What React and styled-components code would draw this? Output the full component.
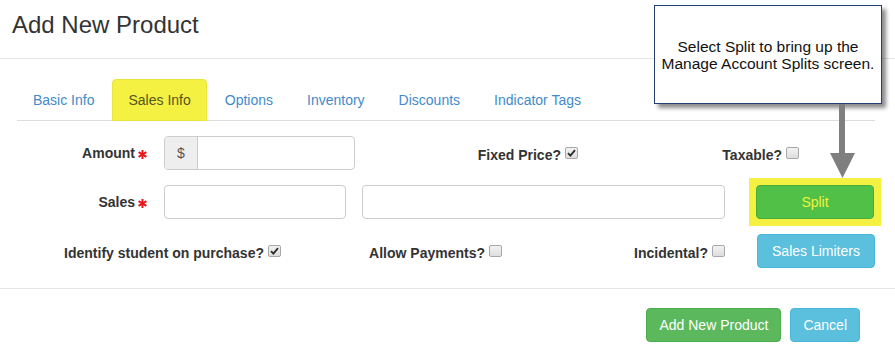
import React from "react";
import styled, { createGlobalStyle } from "styled-components";

const Global = createGlobalStyle`
  html, body {
    margin: 0;
    padding: 0;
    background: #fff;
  }
  body {
    font-family: "Liberation Sans", Arial, Helvetica, sans-serif;
    font-size: 14px;
    color: #333;
  }
  * { box-sizing: border-box; }
`;

const Modal = styled.div`
  position: relative;
  width: 895px;
  height: 358px;
  overflow: hidden;
`;

const Header = styled.div`
  padding: 12px 12px 20px;
  border-bottom: 1px solid #e5e5e5;
`;

const Title = styled.h4`
  margin: 0;
  font-size: 24px;
  line-height: 26px;
  font-weight: normal;
  color: #333;
`;

const Body = styled.div`
  padding: 20px 20px 20px 17px;
`;

const Tabs = styled.ul`
  display: flex;
  margin: 0;
  padding: 0;
  list-style: none;
  border-bottom: 1px solid #ddd;
`;

const Tab = styled.li`
  margin: 0 2px -1px 0;
  padding: 10px 15px;
  line-height: 20px;
  border: 1px solid ${(p) => (p.$active ? "#e8e53c" : "transparent")};
  border-radius: 4px 4px 0 0;
  background: ${(p) => (p.$active ? "#f4f142" : "transparent")};
  color: ${(p) => (p.$active ? "#55551f" : "#428bca")};
`;

const Content = styled.div`
  padding-top: 15px;
  display: flex;
  flex-direction: column;
  gap: 15px;
`;

const Row = styled.div`
  display: flex;
  align-items: center;
  height: 34px;
`;

const Label = styled.div`
  width: 130px;
  margin-right: 17px;
  display: flex;
  justify-content: flex-end;
  align-items: center;
  gap: 3px;
  font-weight: bold;
  line-height: 20px;
`;

const Field = styled.div`
  width: ${(p) => p.$w}px;
  margin-left: ${(p) => p.$ml || 0}px;
  height: 34px;
  border: 1px solid #ccc;
  border-radius: 4px;
  background: #fff;
  display: flex;
`;

const Addon = styled.span`
  width: 33px;
  display: flex;
  align-items: center;
  justify-content: center;
  background: #eee;
  border-right: 1px solid #ccc;
  border-radius: 3px 0 0 3px;
  color: #555;
`;

const CheckCell = styled.div`
  width: ${(p) => p.$w}px;
  display: flex;
  justify-content: flex-end;
  align-items: center;
  gap: 4px;
  font-weight: bold;
  line-height: 20px;
`;

const CheckText = styled.span`
  padding-top: 4px;
`;

const Box = styled.span`
  width: 13px;
  height: 12px;
  border: 1px solid #a8a8a8;
  border-radius: 2px;
  background: linear-gradient(#f2f2f2, #dedede);
  display: flex;
  align-items: center;
  justify-content: center;
`;

const Btn = styled.button`
  font-family: inherit;
  font-size: 14px;
  line-height: 20px;
  height: 34px;
  width: ${(p) => (p.$w ? `${p.$w}px` : "auto")};
  padding: 0 12px;
  border-radius: 4px;
  border: 1px solid ${(p) => p.$border};
  background: ${(p) => p.$bg};
  color: ${(p) => p.$fg || "#fff"};
  cursor: pointer;
`;

const Highlight = styled.span`
  display: flex;
  margin: -7px -7px -7px 24px;
  padding: 7px;
  background: #f4f142;
`;

const Footer = styled.div`
  border-top: 1px solid #e5e5e5;
  padding: 19px 35px 16px;
  display: flex;
  justify-content: flex-end;
  gap: 9px;
`;

const Callout = styled.div`
  position: absolute;
  left: 654px;
  top: 5px;
  width: 228px;
  height: 99px;
  border: 1.5px solid #24406e;
  background: #fff;
  box-shadow: 4px 4px 4px rgba(0, 0, 0, 0.45);
  display: flex;
  align-items: center;
  justify-content: center;
  text-align: center;
  font-size: 15.5px;
  line-height: 17px;
  color: #111;
`;

const Arrow = styled.svg`
  position: absolute;
  left: 829px;
  top: 104px;
`;

function Star() {
  return (
    <svg width="9" height="9" viewBox="0 0 9 9" style={{ marginTop: 2 }}>
      <g stroke="#e8141b" strokeWidth="2" strokeLinecap="butt">
        <line x1="4.5" y1="0" x2="4.5" y2="9" />
        <line x1="0.6" y1="2.2" x2="8.4" y2="6.8" />
        <line x1="0.6" y1="6.8" x2="8.4" y2="2.2" />
      </g>
    </svg>
  );
}

function Check({ checked }) {
  return (
    <Box>
      {checked && (
        <svg width="9" height="8" viewBox="0 0 9 8">
          <path d="M1 4.2 L3.4 6.6 L8 1.2" fill="none" stroke="#2d2d2d" strokeWidth="1.8" />
        </svg>
      )}
    </Box>
  );
}

function CheckField({ w, label, checked }) {
  return (
    <CheckCell $w={w}>
      <CheckText>{label}</CheckText>
      <Check checked={checked} />
    </CheckCell>
  );
}

const tabs = ["Basic Info", "Sales Info", "Options", "Inventory", "Discounts", "Indicator Tags"];

export default function App() {
  return (
    <>
      <Global />
      <Modal>
        <Header>
          <Title>Add New Product</Title>
        </Header>
        <Body>
          <Tabs>
            {tabs.map((t) => (
              <Tab key={t} $active={t === "Sales Info"}>
                {t}
              </Tab>
            ))}
          </Tabs>
          <Content>
            <Row>
              <Label>
                Amount <Star />
              </Label>
              <Field $w={191}>
                <Addon>$</Addon>
              </Field>
              <CheckField w={223} label="Fixed Price?" checked />
              <CheckField w={221} label="Taxable?" />
            </Row>
            <Row>
              <Label>
                Sales <Star />
              </Label>
              <Field $w={182} />
              <Field $w={363} $ml={16} />
              <Highlight>
                <Btn $w={118} $bg="#50c046" $border="#47ad3d" $fg="#f2f03e">
                  Split
                </Btn>
              </Highlight>
            </Row>
            <Row>
              <CheckField w={264} label="Identify student on purchase?" checked />
              <CheckField w={221} label="Allow Payments?" />
              <CheckField w={223} label="Incidental?" />
              <Btn $w={118} $bg="#5bc0de" $border="#46b8da" style={{ marginLeft: 32 }}>
                Sales Limiters
              </Btn>
            </Row>
          </Content>
        </Body>
        <Footer>
          <Btn $bg="#5cb85c" $border="#4cae4c">Add New Product</Btn>
          <Btn $bg="#5bc0de" $border="#46b8da">Cancel</Btn>
        </Footer>
        <Callout>
          Select Split to bring up the
          <br />
          Manage Account Splits screen.
        </Callout>
        <Arrow width="28" height="75" viewBox="0 0 28 75">
          <rect x="10" y="0" width="6" height="50" fill="#7f7f7f" />
          <polygon points="1,49 26,49 13.5,74" fill="#7f7f7f" />
        </Arrow>
      </Modal>
    </>
  );
}
